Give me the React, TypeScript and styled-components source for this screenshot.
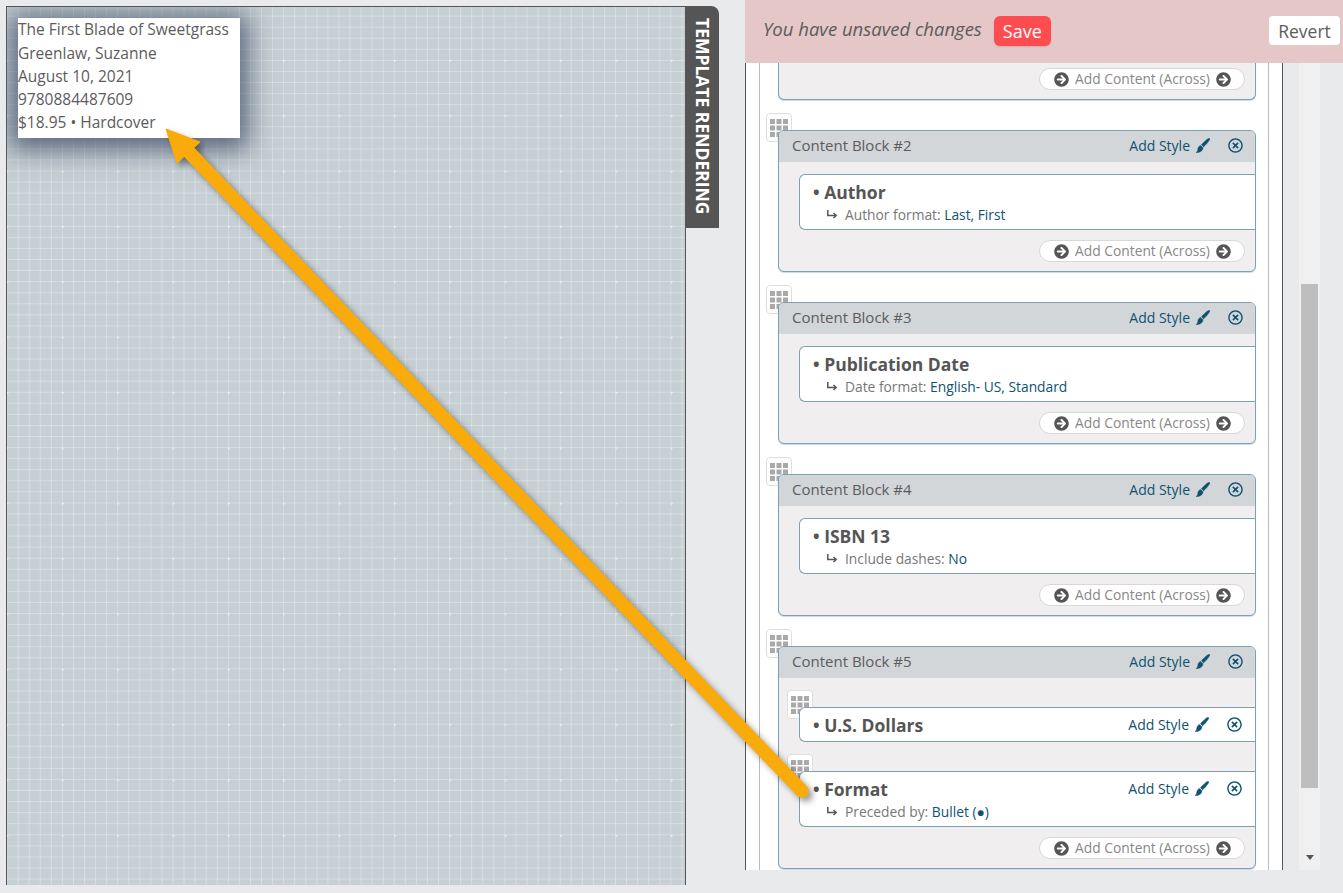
import React from "react";
import styled, { createGlobalStyle } from "styled-components";
import { FaArrowCircleRight, FaRegTimesCircle } from "react-icons/fa";

const Global = createGlobalStyle`
  html, body { margin: 0; padding: 0; height: 100%; background: #e9eaec; overflow: hidden; }
  body { font-family: "Open Sans", "Liberation Sans", sans-serif; color: #555; }
  * { box-sizing: border-box; }
`;

const Page = styled.div`
  position: relative;
  display: flex;
  width: 1343px;
  height: 893px;
  overflow: hidden;
`;

const LeftPane = styled.section`
  display: flex;
  align-items: flex-start;
  width: 745px;
  height: 885px;
  padding: 6px 0 0 6px;
`;

const Canvas = styled.div`
  width: 680px;
  height: 879px;
  padding: 11px;
  overflow: hidden;
  border: 1px solid #555;
  border-bottom: 0;
  background-color: #c6cfd3;
  background-image:
    radial-gradient(circle at 0.5px 0.5px, rgba(255,255,255,.6) 1px, transparent 1.4px),
    linear-gradient(to right, rgba(255,255,255,.3) 1px, transparent 1px),
    linear-gradient(to bottom, rgba(255,255,255,.3) 1px, transparent 1px);
  background-size: 55.36px 55.36px, 11.07px 11.07px, 11.07px 11.07px;
  background-position: -0.4px -2.4px, -0.4px -2.4px, -0.4px -2.4px;
`;

const BookCard = styled.div`
  width: 222px;
  height: 120px;
  background: #fff;
  font-size: 15.5px;
  line-height: 23px;
  color: #5c5c5c;
  box-shadow: 0 4px 24px 8px rgba(70, 85, 110, 0.85);
  & > div:first-child {
    margin-bottom: 1px;
  }
`;

const VerticalTab = styled.div`
  width: 33px;
  height: 222px;
  padding-top: 12px;
  display: flex;
  justify-content: flex-start;
  align-items: center;
  background: #555;
  border-top-right-radius: 8px;
  color: #fff;
  font-size: 17.5px;
  font-weight: 700;
  line-height: 33px;
  writing-mode: vertical-rl;
  white-space: nowrap;
`;

const RightPane = styled.section`
  width: 598px;
  height: 870px;
  display: flex;
  flex-direction: column;
`;

const SaveBar = styled.header`
  flex: none;
  height: 63px;
  display: flex;
  align-items: center;
  padding: 0 3px 2px 18px;
  background: #e5c7c7;
`;

const SaveMessage = styled.em`
  font-size: 18.5px;
  line-height: 24px;
  margin-top: -3px;
  color: #5c5c5c;
`;

const SaveButton = styled.button`
  width: 57px;
  height: 30px;
  margin-left: 12px;
  border: 0;
  border-radius: 6px;
  padding: 0;
  font: 18px "Open Sans", sans-serif;
  color: #fff;
  background: #ff4c50;
  box-shadow: 0 1px 2px rgba(0,0,0,.12);
`;

const RevertButton = styled.button`
  width: 71px;
  height: 29px;
  margin-left: auto;
  border: 0;
  border-radius: 4px;
  padding: 0;
  font: 17.5px "Open Sans", sans-serif;
  color: #5c5c5c;
  background: #fff;
`;

const BodyRow = styled.div`
  flex: 1;
  min-height: 0;
  display: flex;
`;

const ListFrame = styled.div`
  width: 538px;
  padding: 0 13px;
  background: #fff;
  border-left: 1px solid #555;
  border-right: 1px solid #555;
`;

const ListRail = styled.div`
  height: 100%;
  overflow: hidden;
  padding: 0 12px 0 18px;
  border-left: 1px solid #bbb;
  border-right: 1px solid #bbb;
  display: flex;
  flex-direction: column;
  gap: 30px;
`;

const ScrollTrack = styled.div`
  width: 21px;
  margin-left: 16px;
  padding: 221px 2px 0;
  display: flex;
  flex-direction: column;
  align-items: center;
  background: #f0f0f1;
`;

const ScrollThumb = styled.div`
  width: 17px;
  height: 504px;
  background: #bebebe;
`;

const ScrollArrow = styled.div`
  margin-top: 67px;
  width: 0;
  height: 0;
  border-left: 4px solid transparent;
  border-right: 4px solid transparent;
  border-top: 5px solid #555;
`;

const BlockWrap = styled.div`
  position: relative;
  flex: none;
`;

const GripBox = styled.div`
  position: absolute;
  left: -12px;
  top: -17px;
  width: 26px;
  height: 29px;
  padding: 5px 0 0 3px;
  background: #fff;
  border: 1px solid #dedede;
  border-radius: 4px;
  line-height: 0;
`;

const Block = styled.div<{ $clipped?: boolean }>`
  position: relative;
  display: flex;
  flex-direction: column;
  justify-content: flex-end;
  background: #f0eeef;
  border: 1px solid #7f9fb3;
  border-top-width: ${p => (p.$clipped ? 0 : "1px")};
  border-radius: ${p => (p.$clipped ? "0 0 6px 6px" : "6px")};
  height: ${p => (p.$clipped ? "37px" : "auto")};
  box-shadow: 0 1px 1px rgba(127,159,179,.4);
  overflow: hidden;
`;

const BlockHeader = styled.div`
  flex: none;
  height: 31px;
  display: flex;
  align-items: center;
  padding: 0 12px 0 13px;
  background: #d2d6d9;
  font-size: 15px;
  color: #5c5c5c;
`;

const HeaderLabel = styled.span`
  margin-top: -3px;
`;

const Actions = styled.div`
  margin-left: auto;
  margin-top: -2px;
  display: flex;
  align-items: center;
  font-size: 14px;
  color: #0f5272;
`;

const BrushSvg = styled.svg`
  width: 14px;
  height: 15px;
  margin-left: 6px;
  fill: #0f5272;
  stroke: #0f5272;
  stroke-width: 0.4;
`;

const CloseIcon = styled(FaRegTimesCircle)`
  flex: none;
  width: 15px;
  height: 15px;
  margin-left: 18px;
`;

const BlockBody = styled.div<{ $nested?: boolean }>`
  flex: none;
  padding: ${p => (p.$nested ? "29px" : "12px")} 0 0 20px;
  display: flex;
  flex-direction: column;
  gap: 29px;
`;

const ItemWrap = styled.div`
  position: relative;
`;

const Item = styled.div`
  position: relative;
  padding: 5px 13px 4px 12px;
  background: #fff;
  border: 1px solid #7f9fb3;
  border-right: 0;
  border-radius: 6px 0 0 6px;
`;

const ItemHead = styled.div`
  display: flex;
  align-items: center;
  height: 24px;
`;

const ItemTitle = styled.div`
  margin-left: 1px;
  font-size: 17.5px;
  font-weight: 700;
  color: #555;
  white-space: pre;
`;

const Detail = styled.div`
  height: 21px;
  padding: 0 0 0 14px;
  display: flex;
  align-items: center;
  font-size: 13.8px;
  line-height: 20px;
  color: #777;
  white-space: pre;
`;

const DetailArrow = styled.svg`
  flex: none;
  width: 10px;
  height: 9px;
  margin: 0 8px 0 1px;
  fill: none;
  stroke: #555;
  stroke-width: 1.5;
`;

const DetailValue = styled.span`
  color: #0f5272;
`;

const BlockFooter = styled.div`
  flex: none;
  height: 41px;
  padding: 10px 10px 0 0;
  display: flex;
  justify-content: flex-end;
`;

const AddButton = styled.button`
  width: 206px;
  height: 22px;
  padding: 0 13px 0 14px;
  display: flex;
  align-items: center;
  justify-content: space-between;
  background: #fff;
  border: 1px solid #d8d8d8;
  border-radius: 11px;
  font: 13.8px "Open Sans", sans-serif;
  color: #888;
`;

const AddLabel = styled.span`
  margin-top: -2px;
`;

const AddIcon = styled(FaArrowCircleRight)`
  flex: none;
  width: 15px;
  height: 15px;
  color: #555;
`;

const ArrowLayer = styled.svg`
  position: absolute;
  left: 0;
  top: 0;
  pointer-events: none;
  filter: drop-shadow(4px 4px 3px rgba(0, 0, 0, 0.4));
`;

const Grip = () => (
  <GripBox>
    <svg width="20" height="20" viewBox="0 0 20 20" fill="#a9a9a9">
      {[0, 6.5, 13].flatMap(y =>
        [0, 6.5, 13].map(x => <rect key={`${x}-${y}`} x={x} y={y} width="5" height="5" />)
      )}
    </svg>
  </GripBox>
);

const Brush = () => (
  <BrushSvg viewBox="0 0 14 15">
    <path d="M12.6 0.3 C13.4 0.2 14 0.8 13.8 1.6 C12.4 4 10 6.8 7.6 8.9 L5.4 6.8 C7.4 4.4 10.2 1.8 12.6 0.3 Z" />
    <path d="M4.6 7.4 L7 9.8 C6.9 12.8 4 14.9 0 14.6 C1.6 13.6 1.6 12.2 1.9 10.4 C2.2 9 3.2 7.8 4.6 7.4 Z" />
  </BrushSvg>
);

const CornerArrow = () => (
  <DetailArrow viewBox="0 0 10 9">
    <path d="M0.8 0 V5.5 H9" />
    <path d="M6.5 3 L9.2 5.5 L6.5 8" />
  </DetailArrow>
);

const StyleActions = () => (
  <Actions>
    Add Style
    <Brush />
    <CloseIcon />
  </Actions>
);

const AddContent = () => (
  <BlockFooter>
    <AddButton>
      <AddIcon />
      <AddLabel>Add Content (Across)</AddLabel>
      <AddIcon />
    </AddButton>
  </BlockFooter>
);

const simpleBlocks = [
  { n: 2, title: "Author", label: "Author format: ", value: "Last, First" },
  { n: 3, title: "Publication Date", label: "Date format: ", value: "English- US, Standard" },
  { n: 4, title: "ISBN 13", label: "Include dashes: ", value: "No" },
];

const book = [
  "The First Blade of Sweetgrass",
  "Greenlaw, Suzanne",
  "August 10, 2021",
  "9780884487609",
  "$18.95 • Hardcover",
];

export default function App() {
  return (
    <Page>
      <Global />
      <LeftPane>
        <Canvas>
          <BookCard>
            {book.map(l => (
              <div key={l}>{l}</div>
            ))}
          </BookCard>
        </Canvas>
        <VerticalTab>TEMPLATE RENDERING</VerticalTab>
      </LeftPane>
      <RightPane>
        <SaveBar>
          <SaveMessage>You have unsaved changes</SaveMessage>
          <SaveButton>Save</SaveButton>
          <RevertButton>Revert</RevertButton>
        </SaveBar>
        <BodyRow>
          <ListFrame>
            <ListRail>
              <BlockWrap>
                <Block $clipped>
                  <AddContent />
                </Block>
              </BlockWrap>
              {simpleBlocks.map(b => (
                <BlockWrap key={b.n}>
                  <Grip />
                  <Block>
                    <BlockHeader>
                      <HeaderLabel>Content Block #{b.n}</HeaderLabel>
                      <StyleActions />
                    </BlockHeader>
                    <BlockBody>
                      <Item>
                        <ItemHead>
                          <ItemTitle>• {b.title}</ItemTitle>
                        </ItemHead>
                        <Detail>
                          <CornerArrow />
                          {b.label}
                          <DetailValue>{b.value}</DetailValue>
                        </Detail>
                      </Item>
                    </BlockBody>
                    <AddContent />
                  </Block>
                </BlockWrap>
              ))}
              <BlockWrap>
                <Grip />
                <Block>
                  <BlockHeader>
                    <HeaderLabel>Content Block #5</HeaderLabel>
                    <StyleActions />
                  </BlockHeader>
                  <BlockBody $nested>
                    <ItemWrap>
                      <Grip />
                      <Item>
                        <ItemHead>
                          <ItemTitle>• U.S. Dollars</ItemTitle>
                          <StyleActions />
                        </ItemHead>
                      </Item>
                    </ItemWrap>
                    <ItemWrap>
                      <Grip />
                      <Item>
                        <ItemHead>
                          <ItemTitle>• Format</ItemTitle>
                          <StyleActions />
                        </ItemHead>
                        <Detail>
                          <CornerArrow />
                          {"Preceded by: "}
                          <DetailValue>Bullet (●)</DetailValue>
                        </Detail>
                      </Item>
                    </ItemWrap>
                  </BlockBody>
                  <AddContent />
                </Block>
              </BlockWrap>
            </ListRail>
          </ListFrame>
          <ScrollTrack>
            <ScrollThumb />
            <ScrollArrow />
          </ScrollTrack>
        </BodyRow>
      </RightPane>
      <ArrowLayer width="1343" height="893" viewBox="0 0 1343 893">
        <path d="M188 151 L802 791" stroke="#f9ab0b" strokeWidth="13.5" strokeLinecap="round" fill="none" />
        <path d="M166 129 L200 142 L177 163 Z" fill="#f9ab0b" stroke="#f9ab0b" strokeWidth="1" />
      </ArrowLayer>
    </Page>
  );
}
